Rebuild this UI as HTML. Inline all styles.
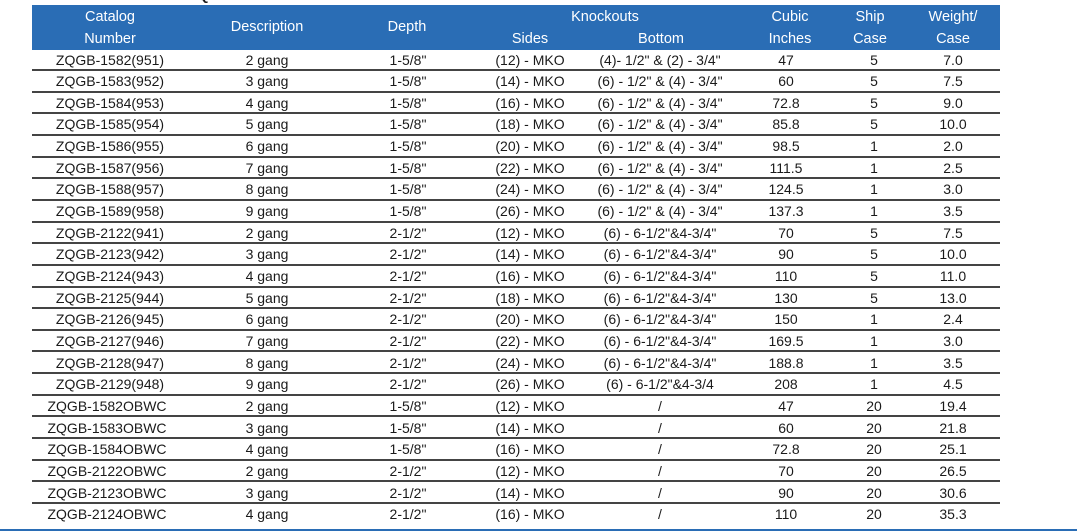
<!DOCTYPE html>
<html><head><meta charset="utf-8"><style>
body{margin:0;width:1077px;height:531px;background:#fff;position:relative;overflow:hidden;font-family:"Liberation Sans",Arial,sans-serif;font-size:14px;color:#1a1a1a}
.h{position:absolute;left:32px;top:5px;width:968px;height:45px;background:#2a6db5}
.t{position:absolute;white-space:nowrap;transform:translateX(-50%);line-height:16px}
.w{color:#fff;font-size:14.5px}
.l{position:absolute;left:32px;width:968px;height:2px;background:#444}
</style></head><body>
<div class="t" style="left:250px;top:-13px;font-weight:bold">ZQGB-2123OBWC</div>
<div class="h"></div>
<div class="t w" style="left:110px;top:9px">Catalog</div>
<div class="t w" style="left:110px;top:31px">Number</div>
<div class="t w" style="left:267px;top:19px">Description</div>
<div class="t w" style="left:407px;top:19px">Depth</div>
<div class="t w" style="left:605px;top:9px">Knockouts</div>
<div class="t w" style="left:530px;top:31px">Sides</div>
<div class="t w" style="left:661px;top:31px">Bottom</div>
<div class="t w" style="left:790px;top:9px">Cubic</div>
<div class="t w" style="left:790px;top:31px">Inches</div>
<div class="t w" style="left:870px;top:9px">Ship</div>
<div class="t w" style="left:870px;top:31px">Case</div>
<div class="t w" style="left:953px;top:9px">Weight/</div>
<div class="t w" style="left:953px;top:31px">Case</div>
<div id="rows"></div>
<div style="position:absolute;left:0;top:529px;width:1077px;height:2px;background:#2a6db5"></div>
<script>
var d=[
["ZQGB-1582(951)","2 gang","1-5/8\"","(12) - MKO","(4)- 1/2\" & (2) - 3/4\"","47","5","7.0"],
["ZQGB-1583(952)","3 gang","1-5/8\"","(14) - MKO","(6) - 1/2\" & (4) - 3/4\"","60","5","7.5"],
["ZQGB-1584(953)","4 gang","1-5/8\"","(16) - MKO","(6) - 1/2\" & (4) - 3/4\"","72.8","5","9.0"],
["ZQGB-1585(954)","5 gang","1-5/8\"","(18) - MKO","(6) - 1/2\" & (4) - 3/4\"","85.8","5","10.0"],
["ZQGB-1586(955)","6 gang","1-5/8\"","(20) - MKO","(6) - 1/2\" & (4) - 3/4\"","98.5","1","2.0"],
["ZQGB-1587(956)","7 gang","1-5/8\"","(22) - MKO","(6) - 1/2\" & (4) - 3/4\"","111.5","1","2.5"],
["ZQGB-1588(957)","8 gang","1-5/8\"","(24) - MKO","(6) - 1/2\" & (4) - 3/4\"","124.5","1","3.0"],
["ZQGB-1589(958)","9 gang","1-5/8\"","(26) - MKO","(6) - 1/2\" & (4) - 3/4\"","137.3","1","3.5"],
["ZQGB-2122(941)","2 gang","2-1/2\"","(12) - MKO","(6) - 6-1/2\"&4-3/4\"","70","5","7.5"],
["ZQGB-2123(942)","3 gang","2-1/2\"","(14) - MKO","(6) - 6-1/2\"&4-3/4\"","90","5","10.0"],
["ZQGB-2124(943)","4 gang","2-1/2\"","(16) - MKO","(6) - 6-1/2\"&4-3/4\"","110","5","11.0"],
["ZQGB-2125(944)","5 gang","2-1/2\"","(18) - MKO","(6) - 6-1/2\"&4-3/4\"","130","5","13.0"],
["ZQGB-2126(945)","6 gang","2-1/2\"","(20) - MKO","(6) - 6-1/2\"&4-3/4\"","150","1","2.4"],
["ZQGB-2127(946)","7 gang","2-1/2\"","(22) - MKO","(6) - 6-1/2\"&4-3/4\"","169.5","1","3.0"],
["ZQGB-2128(947)","8 gang","2-1/2\"","(24) - MKO","(6) - 6-1/2\"&4-3/4\"","188.8","1","3.5"],
["ZQGB-2129(948)","9 gang","2-1/2\"","(26) - MKO","(6) - 6-1/2\"&4-3/4","208","1","4.5"],
["ZQGB-1582OBWC","2 gang","1-5/8\"","(12) - MKO","/","47","20","19.4"],
["ZQGB-1583OBWC","3 gang","1-5/8\"","(14) - MKO","/","60","20","21.8"],
["ZQGB-1584OBWC","4 gang","1-5/8\"","(16) - MKO","/","72.8","20","25.1"],
["ZQGB-2122OBWC","2 gang","2-1/2\"","(12) - MKO","/","70","20","26.5"],
["ZQGB-2123OBWC","3 gang","2-1/2\"","(14) - MKO","/","90","20","30.6"],
["ZQGB-2124OBWC","4 gang","2-1/2\"","(16) - MKO","/","110","20","35.3"]];
var c=[110,267,408,530,660,786,874,953],h="";
d.forEach(function(r,i){var line=70+21.65*i;var top=line-18.5;
r.forEach(function(v,j){var x=c[j];if(j==0&&i>=16)x=107;h+='<div class="t" style="left:'+x+'px;top:'+top.toFixed(1)+'px">'+v.replace(/"/g,'&quot;')+'</div>';});
if(i<21)h+='<div class="l" style="top:'+(line-1).toFixed(1)+'px"></div>';});
document.getElementById("rows").innerHTML=h;
</script>
</body></html>
